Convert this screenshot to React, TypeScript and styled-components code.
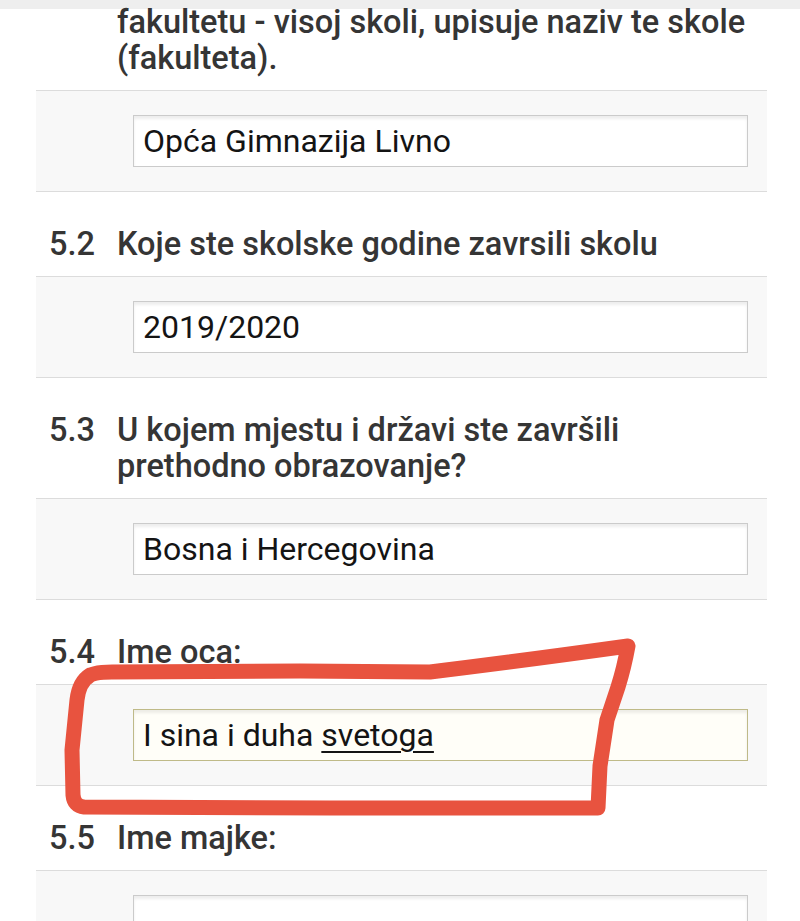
import styled, { createGlobalStyle } from 'styled-components';

const GlobalStyle = createGlobalStyle`
  html, body {
    margin: 0;
    padding: 0;
    background: #ffffff;
  }
  body {
    font-family: Roboto, "Noto Sans", "Liberation Sans", sans-serif;
  }
`;

const Page = styled.div`
  position: relative;
  width: 800px;
  height: 921px;
  overflow: hidden;
  background: #ffffff;
`;

const TopBar = styled.div`
  height: 9px;
  background: #eeeeee;
`;

const Form = styled.div`
  padding: 0 33px 0 36px;
`;

const Label = styled.div<{ $first?: boolean }>`
  display: grid;
  grid-template-columns: 68px 1fr;
  padding: ${p => (p.$first ? '0 0 14px 13px' : '34px 0 14px 13px')};
  margin-top: ${p => (p.$first ? '-5px' : '0')};
  font-size: 32.5px;
  line-height: 36px;
  font-weight: 500;
  color: #353535;
  white-space: nowrap;
`;

const Num = styled.span``;

const Text = styled.span``;

const Panel = styled.div`
  border-top: 1px solid #dcdcdc;
  border-bottom: 1px solid #dcdcdc;
  background: #f8f8f8;
  padding: 24px 19px 24px 97px;
`;

const Input = styled.div<{ $focused?: boolean }>`
  box-sizing: border-box;
  height: 52px;
  display: flex;
  align-items: center;
  padding-left: 9px;
  background: ${p => (p.$focused ? '#fffef8' : '#ffffff')};
  border: 1.5px solid ${p => (p.$focused ? '#bfba88' : '#cbcbcb')};
  box-shadow: inset 0 3px 3px rgba(0, 0, 0, 0.07);
  font-size: 32px;
  color: #141414;
  white-space: nowrap;
`;

const Misspelled = styled.span`
  text-decoration: underline;
  text-decoration-thickness: 2px;
  text-underline-offset: 5px;
`;

const Marker = styled.svg`
  position: absolute;
  left: 0;
  top: 0;
  pointer-events: none;
`;

interface Question {
  num?: string;
  label: React.ReactNode;
  value: React.ReactNode;
  focused?: boolean;
}

const questions: Question[] = [
  {
    label: (
      <>
        fakultetu - visoj skoli, upisuje naziv te skole
        <br />
        (fakulteta).
      </>
    ),
    value: 'Opća Gimnazija Livno',
  },
  { num: '5.2', label: 'Koje ste skolske godine zavrsili skolu', value: '2019/2020' },
  {
    num: '5.3',
    label: (
      <>
        U kojem mjestu i državi ste završili
        <br />
        prethodno obrazovanje?
      </>
    ),
    value: 'Bosna i Hercegovina',
  },
  {
    num: '5.4',
    label: 'Ime oca:',
    value: (
      <>
        I sina i duha&nbsp;<Misspelled>svetoga</Misspelled>
      </>
    ),
    focused: true,
  },
  { num: '5.5', label: 'Ime majke:', value: '' },
];

export default function App() {
  return (
    <>
      <GlobalStyle />
      <Page>
        <TopBar />
        <Form>
          {questions.map((q, i) => (
            <div key={i}>
              <Label $first={i === 0}>
                <Num>{q.num}</Num>
                <Text>{q.label}</Text>
              </Label>
              <Panel>
                <Input $focused={q.focused}>{q.value}</Input>
              </Panel>
            </div>
          ))}
        </Form>
        <Marker width="800" height="921" viewBox="0 0 800 921">
          <path
            d="M 88 677 Q 92 672 112 672 L 300 671 L 430 672 Q 520 661 628 646
               Q 624 668 618 687 L 607 720 L 600 766 L 598 808
               L 330 808 L 84 807 Q 74 806 73 795 L 72 750 L 77 700 Q 79 682 90 675"
            fill="none"
            stroke="#e8533f"
            strokeWidth="15"
            strokeLinecap="round"
            strokeLinejoin="round"
          />
        </Marker>
      </Page>
    </>
  );
}
